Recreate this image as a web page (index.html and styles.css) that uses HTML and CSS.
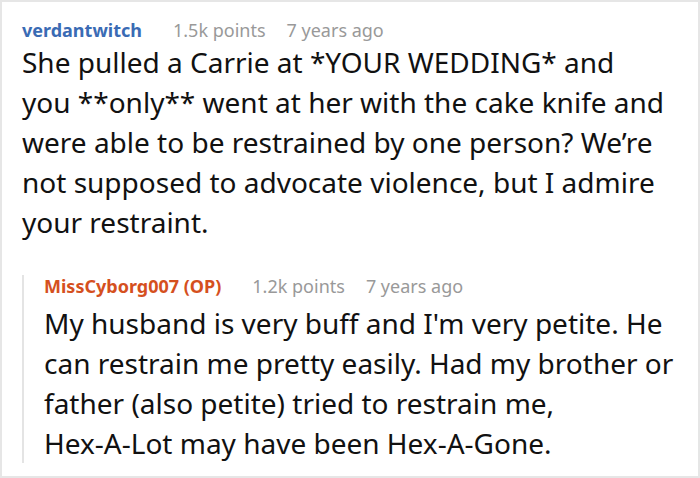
FILE: index.html
```
<!DOCTYPE html>
<html lang="en">
<head>
  <meta charset="UTF-8" />
  <title>Comment</title>
  <link rel="stylesheet" href="styles.css">
</head>
<body>
  <div class="card">
    <div class="comment">
      <div class="meta">
        <span class="author">verdantwitch</span>
        <span class="info">1.5k points</span>
        <span class="info">7 years ago</span>
      </div>
      <p class="text">She pulled a Carrie at *YOUR WEDDING* and<br>you **only** went at her with the cake knife and<br>were able to be restrained by one person? We’re<br>not supposed to advocate violence, but I admire<br>your restraint.</p>
    </div>
    <div class="reply">
      <div class="meta">
        <span class="author op">MissCyborg007 (OP)</span>
        <span class="info">1.2k points</span>
        <span class="info">7 years ago</span>
      </div>
      <p class="text">My husband is very buff and I'm very petite. He<br>can restrain me pretty easily. Had my brother or<br>father (also petite) tried to restrain me,<br>Hex-A-Lot may have been Hex-A-Gone.</p>
    </div>
  </div>
</body>
</html>
```
FILE: styles.css
```
body {
  margin: 0;
  font-family: 'Noto Sans', 'Open Sans', sans-serif;
  background: #fff;
  color: #111;
}
.card {
  width: 700px;
  height: 478px;
  box-sizing: border-box;
  border: 2px solid #e6e6e6;
  padding: 17px 0 0 20px;
}
.meta {
  display: flex;
  gap: 21px;
  font-size: 18px;
  line-height: 22px;
}
.author {
  color: #3a6bb4;
  font-weight: bold;
  margin-right: 10px;
}
.author.op { color: #d5501e; }
.info { color: #999; }
.text {
  margin: 0;
  font-size: 28px;
  line-height: 40px;
  white-space: nowrap;
}
.comment .text { margin-top: 1px; }
.reply {
  margin-top: 33px;
  border-left: 2px solid #e4e4e4;
  padding-left: 20px;
}
.reply .text { margin-top: 6px; }
```
